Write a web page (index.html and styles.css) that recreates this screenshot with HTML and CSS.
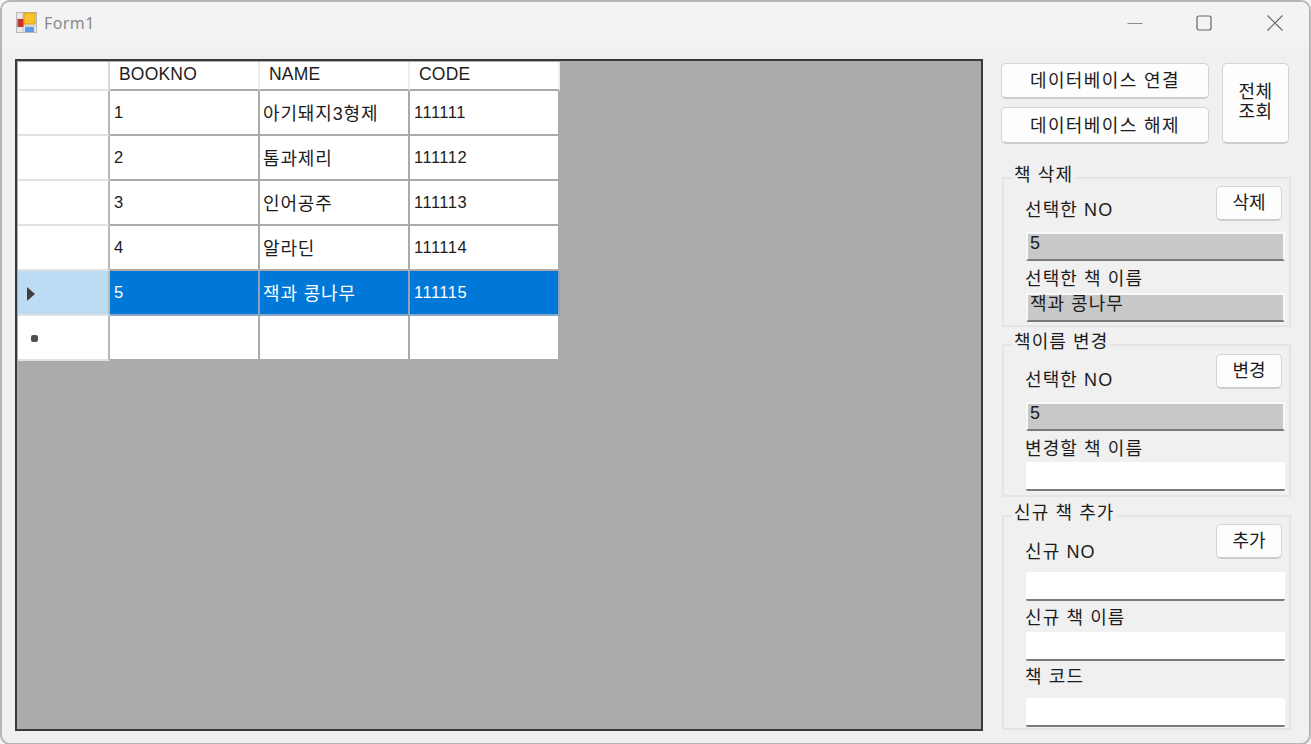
FILE: index.html
```html
<!DOCTYPE html>
<html lang="ko">
<head>
<meta charset="utf-8">
<title>Form1</title>
<link rel="stylesheet" href="styles.css">
</head>
<body>
<div class="window">
  <header class="titlebar">
    <svg class="app-icon" width="21" height="21" viewBox="0 0 21 21">
      <rect x="0.5" y="0.5" width="20" height="20" fill="#e9e9e9" stroke="#b8b8b8"/>
      <path d="M1 7h6M1 14h6M7 1v19M14 14v6M7 14h13" stroke="#c4c4c4" fill="none"/>
      <rect x="8" y="1" width="11" height="11" fill="#f6c32c" stroke="#d69a14"/>
      <rect x="1.5" y="7" width="6" height="8" fill="#c9302a"/>
      <rect x="9" y="15" width="9" height="5" fill="#5b9be8"/>
    </svg>
    <span class="title">Form1</span>
    <div class="caption">
      <svg width="16" height="16" viewBox="0 0 16 16"><path d="M0.5 8.5h15" stroke="#8c8c8c" fill="none"/></svg>
      <svg width="16" height="16" viewBox="0 0 16 16"><rect x="1" y="1" width="14" height="14" rx="2" stroke="#666" stroke-width="1.2" fill="none"/></svg>
      <svg class="close" width="16" height="16" viewBox="0 0 16 16"><path d="M0.5 0.5l15 15M15.5 0.5l-15 15" stroke="#666" stroke-width="1.1" fill="none"/></svg>
    </div>
  </header>
  <main class="client">
    <section class="grid-view">
      <table class="data">
        <thead>
          <tr><th class="rh"></th><th>BOOKNO</th><th>NAME</th><th>CODE</th></tr>
        </thead>
        <tbody>
          <tr><td class="rh"></td><td>1</td><td class="ko">아기돼지3형제</td><td>111111</td></tr>
          <tr><td class="rh"></td><td>2</td><td class="ko">톰과제리</td><td>111112</td></tr>
          <tr><td class="rh"></td><td>3</td><td class="ko">인어공주</td><td>111113</td></tr>
          <tr><td class="rh"></td><td>4</td><td class="ko">알라딘</td><td>111114</td></tr>
          <tr class="selected"><td class="rh"><span class="arrow"></span></td><td>5</td><td class="ko">잭과 콩나무</td><td>111115</td></tr>
          <tr><td class="rh"><span class="star"></span></td><td></td><td></td><td></td></tr>
        </tbody>
      </table>
    </section>
    <aside class="side">
      <div class="top-buttons">
        <div class="db-buttons">
          <button class="btn db">데이터베이스 연결</button>
          <button class="btn db tall">데이터베이스 해제</button>
        </div>
        <button class="btn all">전체<br>조회</button>
      </div>
      <div class="group g1">
        <span class="legend">책 삭제</span>
        <div class="head-row">
          <span class="label lead-a">선택한 NO</span>
          <button class="btn small">삭제</button>
        </div>
        <div class="field ro gap-11">5</div>
        <div class="label gap-7">선택한 책 이름</div>
        <div class="field ro gap-5 raised">잭과 콩나무</div>
      </div>
      <div class="group g2">
        <span class="legend">책이름 변경</span>
        <div class="head-row">
          <span class="label lead-b">선택한 NO</span>
          <button class="btn small">변경</button>
        </div>
        <div class="field ro gap-13">5</div>
        <div class="label gap-7">변경할 책 이름</div>
        <div class="field gap-4"></div>
      </div>
      <div class="group g3">
        <span class="legend">신규 책 추가</span>
        <div class="head-row">
          <span class="label lead-c">신규 NO</span>
          <button class="btn small">추가</button>
        </div>
        <div class="field gap-13"></div>
        <div class="label gap-6">신규 책 이름</div>
        <div class="field gap-5"></div>
        <div class="label gap-5">책 코드</div>
        <div class="field gap-12"></div>
      </div>
    </aside>
  </main>
</div>
</body>
</html>
```
FILE: styles.css
```css
* { box-sizing: border-box; }
html, body { margin: 0; padding: 0; height: 100%; overflow: hidden; background: #f4f4f4; }
body { font-family: "Liberation Sans", "Noto Sans CJK KR", sans-serif; font-size: 17px; color: #1c1c1c; }

.window {
  width: 1311px; height: 745px;
  border: 2px solid #b6b6b6; border-radius: 10px;
  background: #f0f0f0; overflow: hidden;
}
.titlebar {
  height: 45px; background: #f3f3f3;
  display: flex; align-items: center;
  padding: 0 0 4px 14px;
}
.app-icon { flex: none; margin-right: 7px; }
.title { font-family: "Noto Sans", sans-serif; font-size: 16px; color: #8a8a8a; letter-spacing: .4px; }
.caption { margin-left: auto; display: flex; gap: 53px; padding-right: 26px; }
.caption .close { margin-left: 2px; }

.client { display: flex; padding: 12px 0 0 13px; }
.grid-view {
  width: 968px; height: 672px;
  background: #ababab; border: 2px solid #3a3a3a;
  padding: 1px 0 0 1px; flex: none;
}
.data { border-collapse: separate; border-spacing: 0; table-layout: fixed; width: 541px; background: #fff; }
.data th, .data td {
  width: 150px; padding: 0; height: 45px;
  border-right: 2px solid #ababab; border-bottom: 2px solid #ababab;
  font-weight: 400; text-align: left; white-space: nowrap; vertical-align: middle;
}
.data td { padding-left: 4px; font-size: 16.5px; letter-spacing: .5px; }
.data th { height: 29px; padding: 0 0 3px 9px; font-size: 17.5px; border-right-color: #ececec; line-height: 20px; letter-spacing: .2px; }
.data .rh { width: 92px; padding: 0; border-right-color: #d8d8d8; border-bottom-color: #e2e2e2; position: relative; }
.data tbody .rh { border-right-color: #b8b8b8; }
.data .ko { font-size: 18px; letter-spacing: .85px; padding: 0 0 2px 3px; }
.selected td { background: #0078d7; color: #fff; border-color: #8ba6c4; }
.selected td.rh { background: #bcdcf4; }
.arrow {
  display: block; width: 0; height: 0; margin: 2px 0 0 9px;
  border-left: 8px solid #404040; border-top: 7px solid transparent; border-bottom: 7px solid transparent;
}
.star { display: block; width: 7px; height: 7px; margin: 2px 0 0 13px; border-radius: 30%; background: #505050; }

.side { margin-left: 18px; width: 290px; padding-top: 4px; flex: none; }
.top-buttons { display: flex; gap: 13px; }
.db-buttons { display: flex; flex-direction: column; gap: 8px; }
.btn {
  font: inherit; color: #1c1c1c; background: #fdfdfd; padding: 0;
  border: 1px solid #d4d4d4; border-bottom: 2px solid #cdcdcd; border-radius: 5px;
}
.btn.db { width: 208px; height: 36px; letter-spacing: 1.4px; font-size: 18px; padding-bottom: 3px; }
.btn.db.tall { height: 37px; }
.btn.all { width: 67px; height: 81px; line-height: 20px; font-size: 18px; letter-spacing: .5px; padding-bottom: 2px; }
.btn.small { width: 66px; height: 35px; margin-right: 7px; padding-bottom: 4px; font-size: 18px; flex: none; }

.group {
  position: relative; margin-left: 1px; width: 289px;
  border: 2px solid #e4e4e4;
  padding: 7px 4px 0 21px;
}
.g1 { margin-top: 33px; height: 150px; }
.g2 { margin-top: 17px; height: 153px; padding-top: 8px; }
.g3 { margin-top: 18px; height: 215px; }
.legend {
  position: absolute; top: -14px; left: 8px; padding: 0 2px;
  background: #f0f0f0; line-height: 20px; font-size: 18px; letter-spacing: 1.1px;
}
.head-row { display: flex; justify-content: space-between; align-items: flex-start; margin-right: -4px; height: 35px; }
.label { height: 20px; line-height: 22px; font-size: 18px; letter-spacing: 1.1px; }
.lead-a { margin-top: 13px; }
.lead-b { margin-top: 15px; }
.lead-c { margin-top: 17px; }
.field {
  width: 259px; height: 29px; margin-left: 1px;
  background: #fff; border-bottom: 2px solid #7a7a7a; border-radius: 2px;
  font-size: 18px; line-height: 18px; padding-left: 2px;
}
.field.ro { background: #c8c8c8; border-top: 2px solid #f8f8f8; border-left: 2px solid #f8f8f8; border-right: 2px solid #f8f8f8; }
.field.raised { line-height: 19px; letter-spacing: 1px; }
.gap-4 { margin-top: 4px; }
.gap-5 { margin-top: 5px; }
.gap-6 { margin-top: 6px; }
.gap-7 { margin-top: 7px; }
.gap-11 { margin-top: 11px; }
.gap-12 { margin-top: 12px; }
.gap-13 { margin-top: 13px; }
```
